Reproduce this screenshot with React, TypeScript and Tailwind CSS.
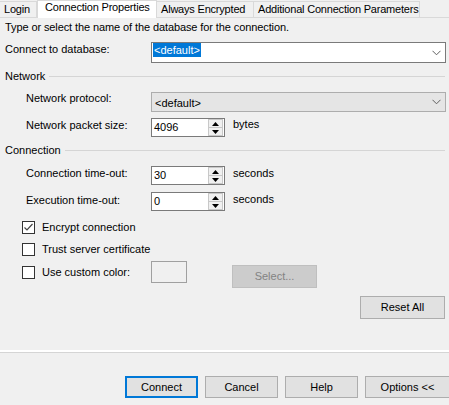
import React from "react";

const font = "font-['Liberation_Sans',Arial,sans-serif]";

function Chevron() {
  return (
    <svg width="9" height="6" viewBox="0 0 9 6" className="shrink-0">
      <polyline points="0.5,0.8 4.5,4.8 8.5,0.8" fill="none" stroke="#606060" strokeWidth="1" />
    </svg>
  );
}

function Spinner() {
  return (
    <div className="flex flex-col w-[15px] h-[17px] mr-[1px] border border-[#c8c8c8] bg-[#f0f0f0]">
      <div className="flex-1 flex items-center justify-center border-b border-[#c8c8c8]">
        <svg width="7" height="4" viewBox="0 0 7 4">
          <polygon points="0,4 7,4 3.5,0" fill="#000" />
        </svg>
      </div>
      <div className="flex-1 flex items-center justify-center">
        <svg width="7" height="4" viewBox="0 0 7 4">
          <polygon points="0,0 7,0 3.5,4" fill="#000" />
        </svg>
      </div>
    </div>
  );
}

function NumberBox({ value }: { value: string }) {
  return (
    <div className="w-[74px] h-[19px] border border-[#7a7a7a] bg-white flex items-center justify-between">
      <span className="pl-[2px] leading-[13px]">{value}</span>
      <Spinner />
    </div>
  );
}

function Check({ checked }: { checked?: boolean }) {
  return (
    <div className="w-[13px] h-[13px] border border-[#333333] bg-white flex items-center justify-center shrink-0">
      {checked && (
        <svg width="11" height="11" viewBox="0 0 11 11">
          <polyline points="1.5,5.5 4,8 9.5,2" fill="none" stroke="#444" strokeWidth="1.2" />
        </svg>
      )}
    </div>
  );
}

function Section({ title }: { title: string }) {
  return (
    <div className="flex items-center h-[13px] pl-[5px] pr-[4px] mt-[7px]">
      <span className="leading-[13px] whitespace-nowrap">{title}</span>
      <div className="flex-1 ml-[4px] border-t border-[#d5d5d5]" />
    </div>
  );
}

function Btn({ label, primary, className = "" }: { label: string; primary?: boolean; className?: string }) {
  return (
    <div
      className={`h-[22px] flex items-center justify-center bg-[#e1e1e1] ${
        primary ? "border-2 border-[#0078d7]" : "border border-[#adadad]"
      } ${className}`}
    >
      {label}
    </div>
  );
}

export default function App() {
  const tabs = ["Login", "Connection Properties", "Always Encrypted", "Additional Connection Parameters"];
  const widths = ["w-[37px]", "w-[120px]", "w-[97px]", "w-[166px]"];

  return (
    <div className={`${font} w-[449px] h-[405px] bg-[#f0f0f0] overflow-hidden text-[11px] leading-[13px] text-black`}>
      {/* tab strip */}
      <div className="flex items-end h-[18px] border-b border-[#d9d9d9] tracking-[-0.2px]">
        {tabs.map((t, i) =>
          i === 1 ? (
            <div
              key={t}
              className={`${widths[i]} h-[18px] -mb-[1px] bg-white border border-b-0 border-[#d9d9d9] flex items-start pl-[7px] whitespace-nowrap`}
            >
              {t}
            </div>
          ) : (
            <div
              key={t}
              className={`${widths[i]} h-[16px] bg-[#f0f0f0] border border-b-0 border-l-0 border-[#d9d9d9] ${
                i === 0 ? "border-l" : ""
              } flex items-center pl-[4px] whitespace-nowrap`}
            >
              {t}
            </div>
          )
        )}
      </div>

      <div className="pl-[5px] mt-[3px] h-[13px] tracking-[-0.1px]">
        Type or select the name of the database for the connection.
      </div>

      {/* connect to database */}
      <div className="flex items-start mt-[8px]">
        <div className="w-[151px] pl-[5px] pt-[1px]">Connect to database:</div>
        <div className="w-[295px] h-[21px] border border-[#7a7a7a] bg-white flex items-start justify-between pl-[1px] pr-[4px]">
          <span className="bg-[#0078d7] text-white px-[1px] leading-[14px]">&lt;default&gt;</span>
          <div className="self-center">
            <Chevron />
          </div>
        </div>
      </div>

      <Section title="Network" />

      <div className="flex items-start mt-[9px]">
        <div className="w-[151px] pl-[26px]">Network protocol:</div>
        <div className="w-[295px] h-[20px] border border-[#adadad] bg-[#e5e5e5] flex items-center justify-between pl-[3px] pr-[4px]">
          <span className="pt-[2px]">&lt;default&gt;</span>
          <Chevron />
        </div>
      </div>

      <div className="flex items-start mt-[6px]">
        <div className="w-[151px] pl-[26px] pt-[1px]">Network packet size:</div>
        <NumberBox value="4096" />
        <div className="ml-[8px]">bytes</div>
      </div>

      <Section title="Connection" />

      <div className="flex items-start mt-[9px]">
        <div className="w-[151px] pl-[26px] pt-[1px]">Connection time-out:</div>
        <NumberBox value="30" />
        <div className="ml-[8px] pt-[1px]">seconds</div>
      </div>

      <div className="flex items-start mt-[7px]">
        <div className="w-[151px] pl-[26px] pt-[2px]">Execution time-out:</div>
        <NumberBox value="0" />
        <div className="ml-[8px] pt-[1px]">seconds</div>
      </div>

      <div className="flex items-center pl-[22px] mt-[10px] h-[13px]">
        <Check checked />
        <span className="ml-[7px]">Encrypt connection</span>
      </div>

      <div className="flex items-center pl-[22px] mt-[9px] h-[13px]">
        <Check />
        <span className="ml-[7px]">Trust server certificate</span>
      </div>

      <div className="flex items-start mt-[5px]">
        <div className="w-[151px] pl-[22px] mt-[5px] flex items-center">
          <Check />
          <span className="ml-[7px]">Use custom color:</span>
        </div>
        <div className="w-[36px] h-[22px] border border-[#a0a0a0] bg-[#f0f0f0]" />
        <div className="ml-[45px] mt-[4px] w-[85px] h-[23px] bg-[#cccccc] border border-[#bfbfbf] text-[#838383] flex items-center justify-center">
          Select...
        </div>
      </div>

      <div className="flex justify-end pr-[4px] mt-[8px]">
        <Btn label="Reset All" className="w-[85px] h-[23px]" />
      </div>

      <div className="mt-[31px] h-[2px] bg-white" />
      <div className="h-[1px] bg-[#d5d5d5]" />

      <div className="flex mt-[23px] pl-[125px] gap-[7px]">
        <Btn label="Connect" primary className="w-[73px] shrink-0" />
        <Btn label="Cancel" className="w-[73px] shrink-0" />
        <Btn label="Help" className="w-[73px] shrink-0" />
        <Btn label="Options <<" className="w-[85px] shrink-0" />
      </div>
    </div>
  );
}
